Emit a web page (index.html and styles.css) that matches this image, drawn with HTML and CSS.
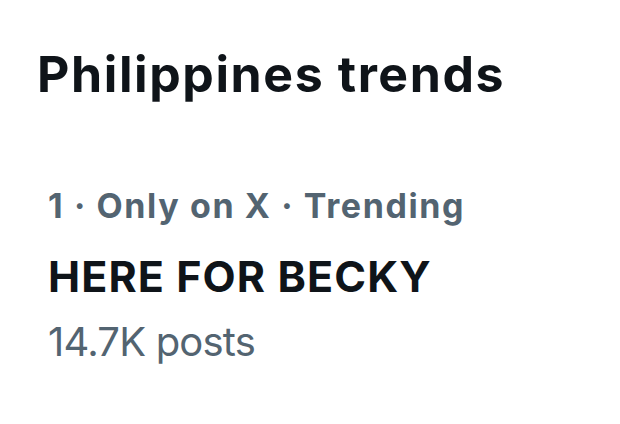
FILE: index.html
```html
<!DOCTYPE html>
<html>
<head>
<meta charset="utf-8">
<link rel="stylesheet" href="styles.css">
</head>
<body>
<main class="page">
  <h2 class="title">Philippines trends</h2>
  <section class="trend">
    <div class="meta">1 · Only on X · Trending</div>
    <div class="name">HERE FOR BECKY</div>
    <div class="count">14.7K posts</div>
  </section>
</main>
</body>
</html>
```
FILE: styles.css
```css
html, body {
  margin: 0;
  padding: 0;
  background: #ffffff;
}
.page {
  width: 620px;
  height: 424px;
  padding: 44px 0 0 37px;
  box-sizing: border-box;
  font-family: Inter, "Noto Sans", sans-serif;
}
.title {
  margin: 0;
  font-size: 50px;
  line-height: 60px;
  font-weight: 700;
  color: #0f1419;
  letter-spacing: 1.6px;
}
.trend {
  margin-top: 80px;
  padding-left: 11px;
  display: flex;
  flex-direction: column;
}
.meta {
  font-size: 34px;
  line-height: 44px;
  font-weight: 700;
  color: #536471;
  letter-spacing: 1.6px;
}
.name {
  margin-top: 24px;
  font-size: 43px;
  line-height: 48px;
  font-weight: 700;
  color: #0f1419;
  letter-spacing: 1.1px;
}
.count {
  margin-top: 18px;
  font-size: 40px;
  line-height: 48px;
  font-weight: 400;
  color: #536471;
  letter-spacing: -0.8px;
}
```
